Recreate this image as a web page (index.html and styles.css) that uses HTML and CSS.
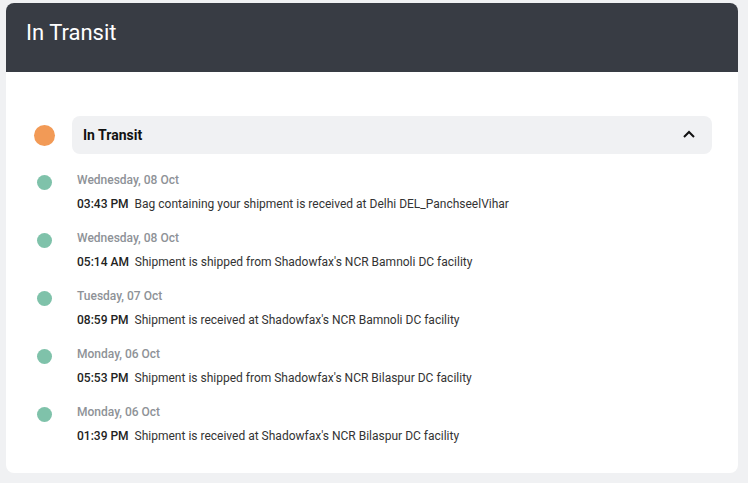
FILE: index.html
```html
<!DOCTYPE html>
<html lang="en">
<head>
    <meta charset="UTF-8">
    <meta name="viewport" content="width=device-width, initial-scale=1.0">
    <title>In Transit</title>
    <link rel="stylesheet" href="styles.css">
</head>
<body>
    <div class="card">
        <header class="card-header">
            <h1>In Transit</h1>
        </header>
        <div class="card-body">
            <div class="status-row">
                <div class="dot-col"><span class="dot dot-big"></span></div>
                <div class="status-pill">
                    <span>In Transit</span>
                    <svg width="14" height="10" viewBox="0 0 14 10"><polyline points="2,8 7,3 12,8" fill="none" stroke="#111" stroke-width="2"/></svg>
                </div>
            </div>
            <div class="event">
                <div class="dot-col"><span class="dot"></span></div>
                <div class="event-text">
                    <div class="date">Wednesday, 08 Oct</div>
                    <div class="line"><b>03:43 PM</b> Bag containing your shipment is received at Delhi DEL_PanchseelVihar</div>
                </div>
            </div>
            <div class="event">
                <div class="dot-col"><span class="dot"></span></div>
                <div class="event-text">
                    <div class="date">Wednesday, 08 Oct</div>
                    <div class="line"><b>05:14 AM</b> Shipment is shipped from Shadowfax's NCR Bamnoli DC facility</div>
                </div>
            </div>
            <div class="event">
                <div class="dot-col"><span class="dot"></span></div>
                <div class="event-text">
                    <div class="date">Tuesday, 07 Oct</div>
                    <div class="line"><b>08:59 PM</b> Shipment is received at Shadowfax's NCR Bamnoli DC facility</div>
                </div>
            </div>
            <div class="event">
                <div class="dot-col"><span class="dot"></span></div>
                <div class="event-text">
                    <div class="date">Monday, 06 Oct</div>
                    <div class="line"><b>05:53 PM</b> Shipment is shipped from Shadowfax's NCR Bilaspur DC facility</div>
                </div>
            </div>
            <div class="event">
                <div class="dot-col"><span class="dot"></span></div>
                <div class="event-text">
                    <div class="date">Monday, 06 Oct</div>
                    <div class="line"><b>01:39 PM</b> Shipment is received at Shadowfax's NCR Bilaspur DC facility</div>
                </div>
            </div>
        </div>
    </div>
</body>
</html>
```

FILE: styles.css
```css
body {
    margin: 0;
    padding: 3px 10px 10px 6px;
    background-color: #f0f1f3;
    font-family: Roboto, "Liberation Sans", sans-serif;
}
.card {
    width: 732px;
    background-color: #fff;
    border-radius: 8px;
    overflow: hidden;
}
.card-header {
    background-color: #383c44;
    height: 69px;
    padding: 0 20px;
    display: flex;
    align-items: center;
}
.card-header h1 {
    margin: 0 0 10px 0;
    color: #fff;
    font-size: 22px;
    font-weight: 400;
}
.card-body {
    padding: 44px 26px 25px 27px;
}
.dot-col {
    width: 22px;
    flex-shrink: 0;
    display: flex;
    justify-content: center;
}
.dot {
    width: 15px;
    height: 15px;
    border-radius: 50%;
    background-color: #7fc2aa;
    margin-top: 7px;
}
.dot-big {
    width: 21px;
    height: 21px;
    margin-top: 0;
    background-color: #f29a56;
}
.status-row {
    display: flex;
    align-items: center;
    gap: 17px;
    margin-bottom: 14px;
}
.status-row .dot-col {
    align-items: center;
}
.status-pill {
    flex: 1;
    height: 38px;
    background-color: #f0f1f3;
    border-radius: 8px;
    display: flex;
    align-items: center;
    justify-content: space-between;
    padding: 0 16px 0 11px;
    font-size: 14px;
    font-weight: 700;
    color: #111;
}
.status-pill svg {
    margin-top: -2px;
}
.event {
    display: flex;
    gap: 22px;
    margin-bottom: 10px;
}
.event:last-child {
    margin-bottom: 0;
}
.date {
    font-size: 12px;
    line-height: 24px;
    font-weight: 500;
    color: #8e9297;
}
.line {
    font-size: 12px;
    line-height: 24px;
    color: #333;
}
.line b {
    font-weight: 500;
    color: #222;
    margin-right: 3px;
}
```
